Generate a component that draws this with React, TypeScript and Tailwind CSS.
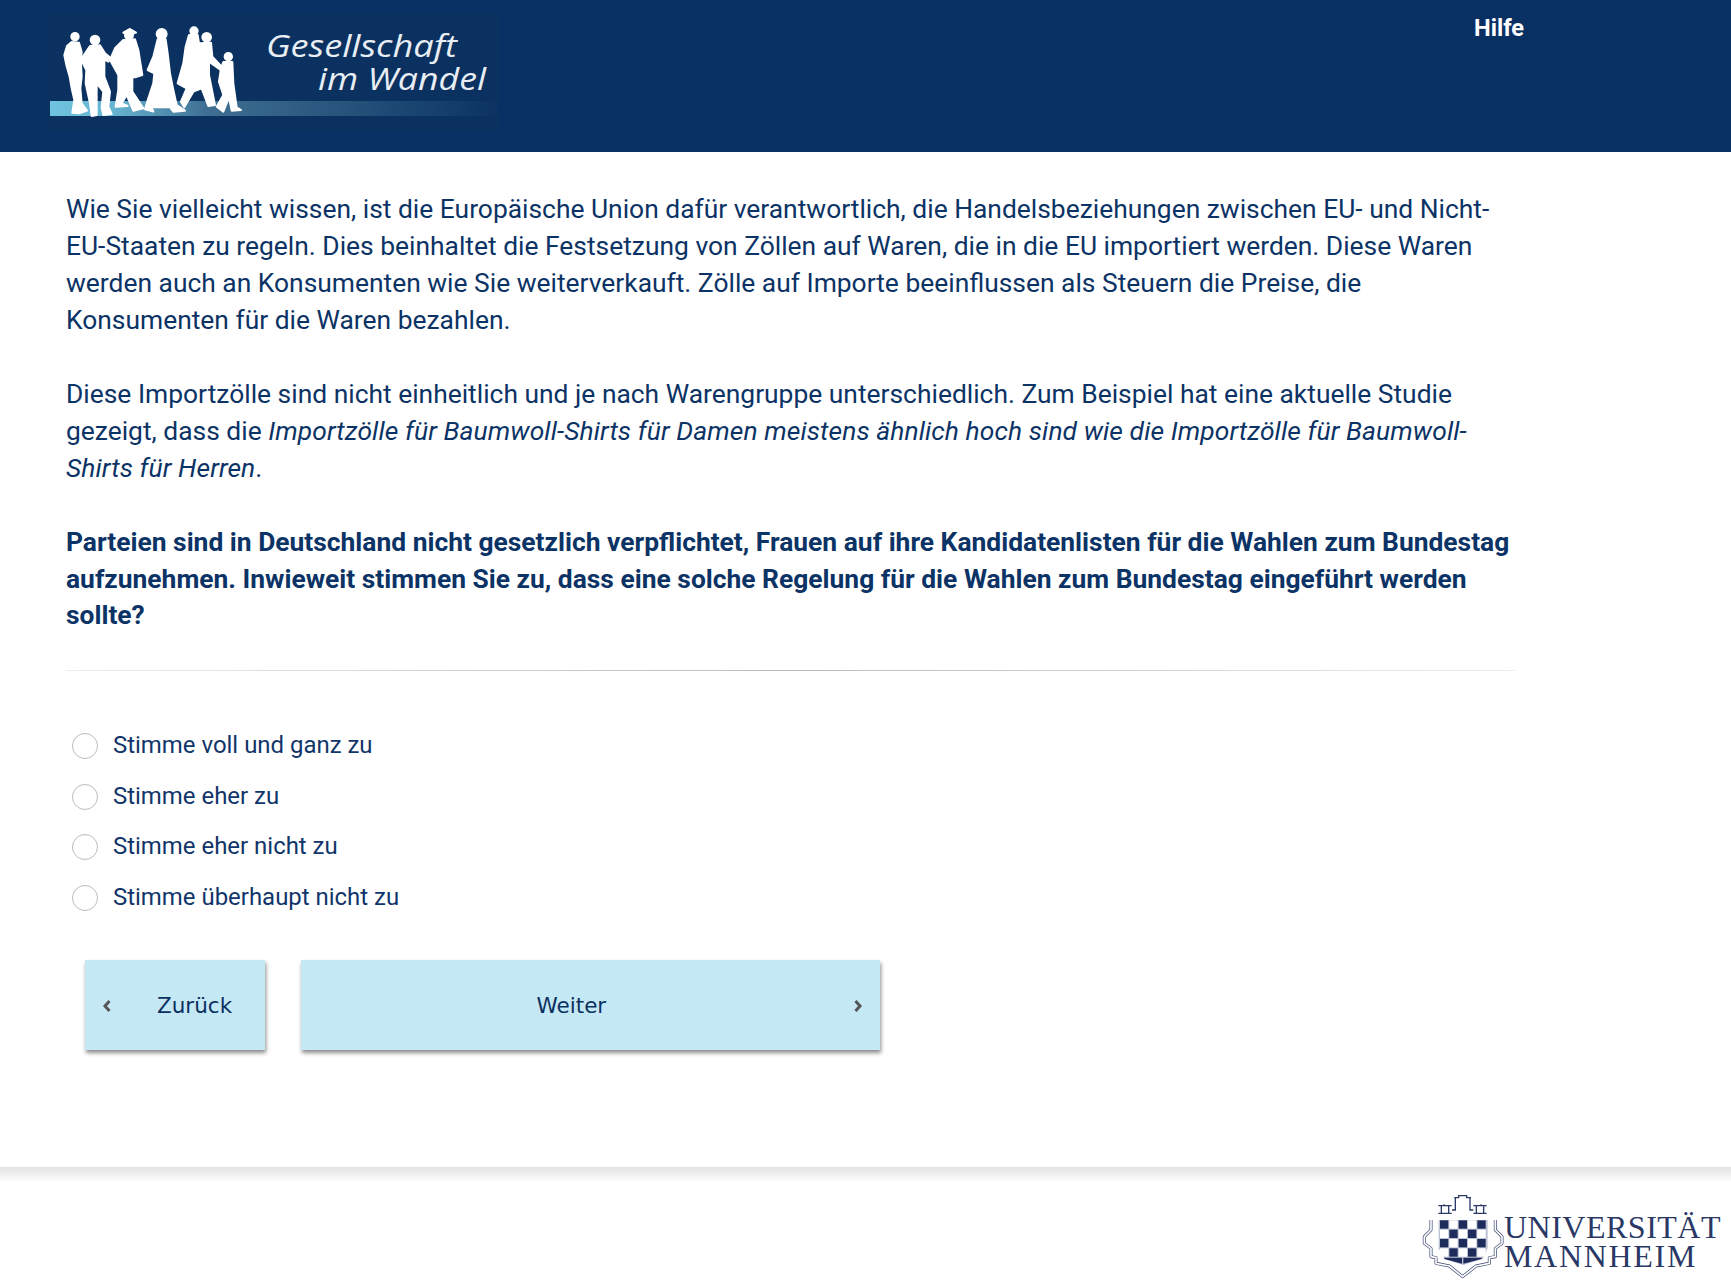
const options = [
  "Stimme voll und ganz zu",
  "Stimme eher zu",
  "Stimme eher nicht zu",
  "Stimme überhaupt nicht zu",
];

function Chevron({ left }: { left?: boolean }) {
  return (
    <svg width="10" height="14" viewBox="0 0 10 14" className="block shrink-0">
      <path
        d={left ? "M7.5 2 L3 7 L7.5 12" : "M2.5 2 L7 7 L2.5 12"}
        fill="none"
        stroke="#555555"
        strokeWidth="3"
      />
    </svg>
  );
}

function Logo() {
  return (
    <svg width="452" height="120" viewBox="0 0 452 120" className="block">
      <defs>
        <linearGradient id="band" x1="0" x2="1" y1="0" y2="0">
          <stop offset="0" stopColor="#6fc3de" />
          <stop offset="0.14" stopColor="#67b5d0" />
          <stop offset="0.35" stopColor="#3f6f92" />
          <stop offset="0.75" stopColor="#1f4a75" />
          <stop offset="1" stopColor="#0c3363" />
        </linearGradient>
      </defs>
      <rect width="452" height="120" fill="#0b3161" />
      <rect x="2" y="89" width="448" height="15" fill="url(#band)" />
      <g transform="translate(7 8) scale(0.3333)" fill="#fff" stroke="#fff" strokeWidth="6" strokeLinejoin="round">
        <circle cx="60" cy="50" r="11" />
        <path d="M36 78 L50 66 L72 68 L80 95 L78 130 L80 170 L76 205 L80 250 L96 272 L72 280 L52 278 L58 240 L50 205 L44 170 L34 135 L28 105 Z" />
        <circle cx="120" cy="60" r="13" />
        <path d="M105 78 L135 76 L150 100 L168 115 L160 125 L148 118 L148 170 L165 215 L160 260 L170 282 L145 285 L140 262 L145 215 L125 190 L125 285 L110 288 L105 250 L92 190 L94 150 L78 118 Z" />
        <circle cx="222" cy="46" r="12" />
        <path d="M205 38 L225 27 L243 38 L226 44 Z" />
        <path d="M205 60 L240 58 L250 90 L262 165 L240 172 L232 172 L232 215 L265 265 L235 272 L215 225 L200 250 L218 258 L182 260 L190 210 L190 165 L165 120 L180 85 Z" />
        <circle cx="320" cy="42" r="15" />
        <path d="M308 58 L332 58 L338 100 L345 160 L355 210 L365 255 L390 272 L355 275 L345 262 L290 262 L295 275 L270 268 L280 235 L295 190 L298 160 L278 150 L295 110 Z" />
        <circle cx="417" cy="33" r="11" />
        <circle cx="455" cy="52" r="13" />
        <path d="M402 45 L428 45 L432 70 L468 68 L472 110 L505 145 L497 150 L462 125 L462 165 L480 255 L460 258 L440 205 L415 215 L388 262 L378 245 L395 205 L368 190 L385 130 L392 80 Z" />
        <circle cx="520" cy="110" r="11" />
        <path d="M505 126 L532 126 L535 190 L545 262 L558 270 L530 272 L522 232 L505 275 L485 260 L505 225 L492 185 L498 145 Z" />
      </g>
      <g fill="#e8eef3" fontFamily="'Open Sans', sans-serif" fontStyle="italic" fontSize="31">
        <text x="218" y="45" textLength="191" lengthAdjust="spacingAndGlyphs">Gesellschaft</text>
        <text x="270" y="78" textLength="168" lengthAdjust="spacingAndGlyphs">im Wandel</text>
      </g>
    </svg>
  );
}

function UmaLogo() {
  const cells = [
    [0, 0, 1], [1, 0, 0], [2, 0, 1], [3, 0, 0], [4, 0, 1],
    [0, 1, 0], [1, 1, 1], [2, 1, 0], [3, 1, 1], [4, 1, 0],
    [0, 2, 1], [1, 2, 0], [2, 2, 1], [3, 2, 0], [4, 2, 1],
    [0, 3, 0], [1, 3, 1], [2, 3, 0], [3, 3, 1], [4, 3, 0],
  ];
  const outline =
    "M45 105 V135 L25 155 V175 L45 190 V215 L60 218 V235 L100 243 L140 275 L180 243 L220 235 V218 L238 215 V190 L258 175 V155 L238 135 V105";
  return (
    <svg width="88" height="95" viewBox="0 0 264 285" className="block shrink-0">
      <g fill="none" stroke="#2b3a66" strokeWidth="4">
        <path d="M115 38 H128 V32 H152 V38 H165 M118 38 V75 H108 M162 38 V75 H172" />
        <path d="M67 62 H107 M76 62 V85 M98 62 V85 M67 85 H107" />
        <path d="M172 62 H212 M181 62 V85 M203 62 V85 M172 85 H212" />
        <path d="M84 58 V62 M195 58 V62" />
      </g>
      <g fill="none" strokeLinejoin="round">
        <path d={outline} stroke="#39466f" strokeWidth="9" />
        <path d={outline} stroke="#fff" strokeWidth="5" />
      </g>
      <path d="M68 105 H215 V190 L200 222 L142 240 L85 222 L68 190 Z" fill="#bcc2d4" />
      {cells.map(([x, y, dark]) => (
        <rect
          key={`${x}-${y}`}
          x={72 + x * 28}
          y={106 + y * 28}
          width="25"
          height="25"
          fill={dark ? "#1e2c5c" : "#fff"}
        />
      ))}
      <path d="M85 218 H138 V236 L85 222 Z M142 236 V218 H198 L196 222 Z" fill="#1e2c5c" />
    </svg>
  );
}

export default function App() {
  return (
    <div className="w-[1731px] h-[1287px] overflow-hidden bg-white font-['Roboto',sans-serif] text-[#0c3365]">
      <header className="h-[152px] bg-[#093063] flex items-start pl-[48px] pt-[12px]">
        <Logo />
        <a href="#" className="ml-[974px] mt-[2px] text-[23.6px] leading-[28px] font-bold text-white">
          Hilfe
        </a>
      </header>

      <main className="pl-[66px] pt-[39px]">
        <div className="w-[1450px] text-[26.4px] leading-[36.96px]">
          <p>
            Wie Sie vielleicht wissen, ist die Europäische Union dafür verantwortlich, die Handelsbeziehungen zwischen EU- und Nicht-EU-Staaten zu regeln. Dies beinhaltet die Festsetzung von Zöllen auf Waren, die in die EU importiert werden. Diese Waren werden auch an Konsumenten wie Sie weiterverkauft. Zölle auf Importe beeinflussen als Steuern die Preise, die Konsumenten für die Waren bezahlen.
          </p>
          <br />
          <p>
            Diese Importzölle sind nicht einheitlich und je nach Warengruppe unterschiedlich. Zum Beispiel hat eine aktuelle Studie gezeigt, dass die{" "}
            <em className="tracking-[0.094px]">
              Importzölle für Baumwoll-Shirts für Damen meistens ähnlich hoch sind wie die Importzölle für Baumwoll-Shirts für Herren
            </em>
            .
          </p>
          <br />
          <p className="font-bold">
            Parteien sind in Deutschland nicht gesetzlich verpflichtet, Frauen auf ihre Kandidatenlisten für die Wahlen zum Bundestag aufzunehmen. Inwieweit stimmen Sie zu, dass eine solche Regelung für die Wahlen zum Bundestag eingeführt werden sollte?
          </p>
        </div>

        <hr className="w-[1450px] mt-[36px] border-0 h-px bg-gradient-to-r from-[#eeeeee] via-[#bbbbbb] to-[#eeeeee]" />

        <div className="mt-[49.5px] flex flex-col">
          {options.map((o) => (
            <label key={o} className="h-[50.5px] flex items-center pl-[6px] gap-[15px] text-[23.95px] text-[#11356a]">
              <span className="w-[26px] h-[26px] rounded-full border border-[#bdbdbd] bg-white" />
              {o}
            </label>
          ))}
        </div>

        <div className="mt-[37px] ml-[19px] flex gap-[36px]">
          <button className="w-[180px] h-[90px] pt-[2px] bg-[#c5e8f5] shadow-[1px_3px_4px_rgba(0,0,0,0.45)] flex items-center pl-[17px] font-['DejaVu_Sans',sans-serif] text-[21.5px] text-[#0b3161]">
            <Chevron left />
            <span className="ml-[45px]">Zurück</span>
          </button>
          <button className="w-[579px] h-[90px] pt-[2px] bg-[#c5e8f5] shadow-[1px_3px_4px_rgba(0,0,0,0.45)] flex items-center justify-between pl-[235.5px] pr-[17px] font-['DejaVu_Sans',sans-serif] text-[21.5px] text-[#0b3161]">
            <span>Weiter</span>
            <Chevron />
          </button>
        </div>
      </main>

      <footer className="mt-[117px]">
        <div className="h-[15px] bg-gradient-to-b from-[#e2e2e2] to-white" />
        <div className="flex justify-end pr-[10px] pt-[3px]">
          <UmaLogo />
          <div className="pt-[28px] font-['Liberation_Serif',serif] text-[32px] leading-[29px] text-[#2a3866]">
            <div className="tracking-[0.5px]">UNIVERSITÄT</div>
            <div className="tracking-[1.7px]">MANNHEIM</div>
          </div>
        </div>
      </footer>
    </div>
  );
}
